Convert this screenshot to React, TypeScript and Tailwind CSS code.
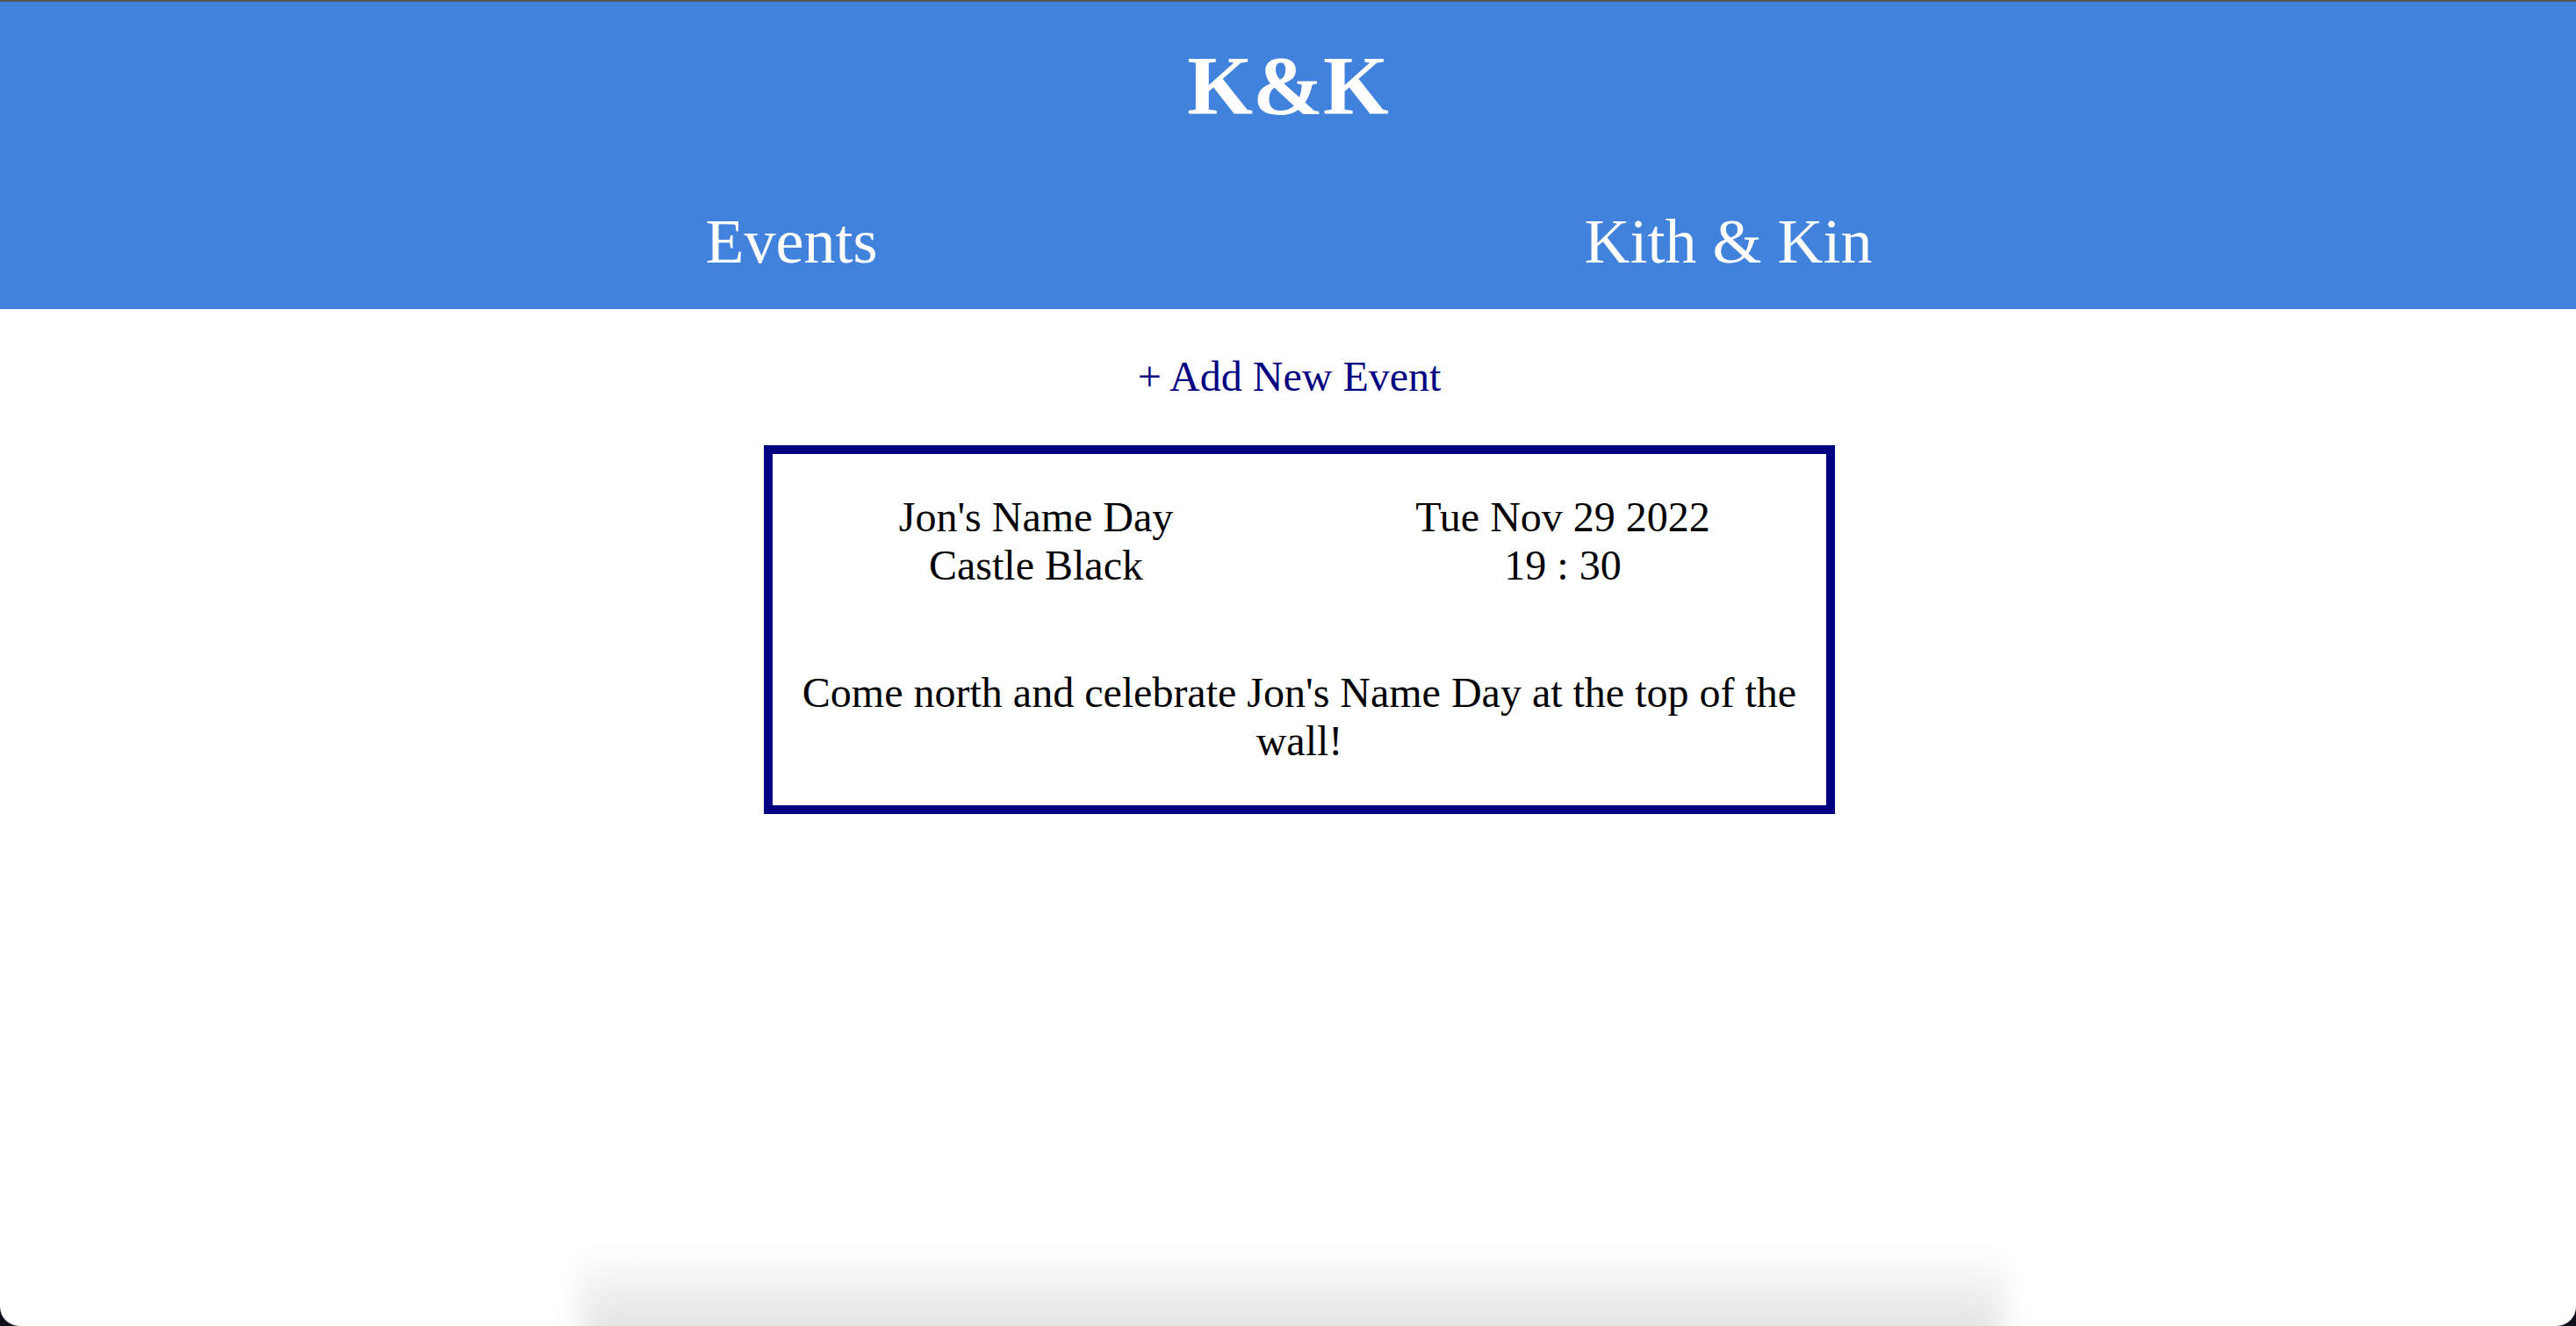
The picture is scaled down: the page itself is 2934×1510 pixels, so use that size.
import React from "react";

export default function App() {
  const serif = { fontFamily: '"Liberation Serif", "Times New Roman", serif' };
  return (
    <div className="h-[1510px] w-full bg-[#10101c] overflow-hidden" style={serif}>
      <div className="relative h-[1510px] w-full bg-white rounded-b-[22px] overflow-hidden">
        <div className="h-[2px] bg-[#545454]" />
        <header className="h-[350px] bg-[#4182dc] text-white">
          <h1 className="pt-[41px] text-center text-[96px] font-bold leading-[110px]">K&amp;K</h1>
          <nav className="mt-[81px] mx-auto w-[2136px] pl-[2px] flex justify-around text-[72px] leading-[83px]">
            <span>Events</span>
            <span>Kith &amp; Kin</span>
          </nav>
        </header>
        <main className="pt-[49px]">
          <div className="text-center text-[48px] leading-[55px] text-[#000080] pl-[3px]">+ Add New Event</div>
          <div className="mt-[51px] flex justify-center pl-[26px]">
            <div className="w-[1220px] border-[10px] border-[#000080] text-black text-[48px] leading-[55px] text-center pt-[44px] pb-[46px]">
              <div className="grid grid-cols-2">
                <div>
                  <div>Jon's Name Day</div>
                  <div>Castle Black</div>
                </div>
                <div>
                  <div>Tue Nov 29 2022</div>
                  <div>19 : 30</div>
                </div>
              </div>
              <p className="mt-[90px]">Come north and celebrate Jon's Name Day at the top of the wall!</p>
            </div>
          </div>
        </main>
        <div className="absolute left-[660px] right-[650px] bottom-[-30px] h-[120px] rounded-[40px] bg-linear-to-b from-white to-[#dcdcdc] blur-[16px]" />
      </div>
    </div>
  );
}
